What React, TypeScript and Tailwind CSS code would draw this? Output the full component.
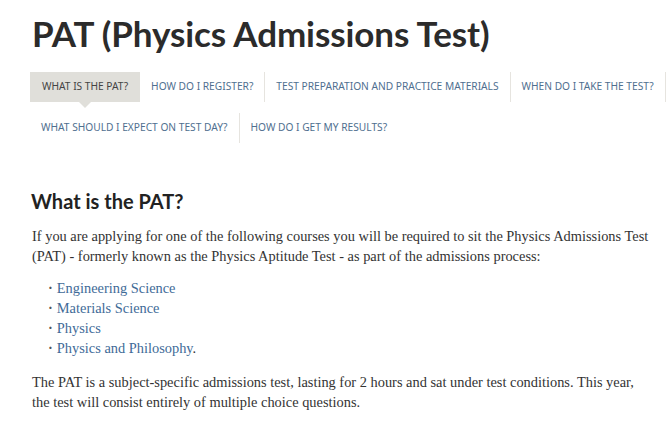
import React from "react";

const rows = [
  [
    { label: "WHAT IS THE PAT?", active: true },
    { label: "HOW DO I REGISTER?" },
    { label: "TEST PREPARATION AND PRACTICE MATERIALS" },
    { label: "WHEN DO I TAKE THE TEST?" },
  ],
  [{ label: "WHAT SHOULD I EXPECT ON TEST DAY?" }, { label: "HOW DO I GET MY RESULTS?", last: true }],
];

const courses = [
  "Engineering Science",
  "Materials Science",
  "Physics",
  "Physics and Philosophy",
];

type Tab = { label: string; active?: boolean; last?: boolean };

function TabItem({ t }: { t: Tab }) {
  if (t.active) {
    return (
      <li className="relative shrink-0 whitespace-nowrap h-[30px] flex items-center px-[12px] bg-[#e0dfda] text-[#444]">
        {t.label}
        <span className="absolute left-1/2 -translate-x-1/2 top-full w-0 h-0 border-l-[6px] border-r-[6px] border-t-[6px] border-l-transparent border-r-transparent border-t-[#e0dfda]" />
      </li>
    );
  }
  return (
    <li
      className={
        t.last
          ? "shrink-0 whitespace-nowrap h-[30px] flex items-center px-[11px] text-[#4f6f8f]"
          : "shrink-0 whitespace-nowrap h-[30px] flex items-center px-[11px] text-[#4f6f8f] border-r border-[#e6e4df]"
      }
    >
      {t.label}
    </li>
  );
}

export default function App() {
  return (
    <div className="w-[667px] h-[428px] overflow-hidden bg-white text-[#333]">
      <div className="pl-[30px] pt-[12px]">
        <h1
          className="text-[35px] leading-[42px] font-bold text-[#2b2b2b] pl-[2px] tracking-[-0.1px]"
          style={{ fontFamily: 'Lato, sans-serif' }}
        >
          PAT (Physics Admissions Test)
        </h1>
        <div
          className="mt-[18px] flex flex-col gap-y-[11px] text-[10.2px]"
          style={{ fontFamily: '"Noto Sans", sans-serif' }}
        >
          {rows.map((r, i) => (
            <ul key={i} className="flex">
              {r.map((t) => (
                <TabItem key={t.label} t={t} />
              ))}
            </ul>
          ))}
        </div>
        <h2
          className="mt-[44px] text-[20px] leading-[28px] font-bold text-[#222] pl-[1px]"
          style={{ fontFamily: 'Lato, sans-serif' }}
        >
          What is the PAT?
        </h2>
        <div
          className="pl-[2px] pr-[16px] text-[14.4px] leading-[20px] text-[#333]"
          style={{ fontFamily: '"Liberation Serif", serif' }}
        >
          <p className="mt-[11px]">
            If you are applying for one of the following courses you will be required to sit the Physics Admissions Test
            (PAT) - formerly known as the Physics Aptitude Test - as part of the admissions process:
          </p>
          <ul className="mt-[12px] pl-[16px]">
            {courses.map((c, i) => (
              <li key={c} className="flex items-baseline gap-[4px]">
                <span className="text-[#555] font-bold">·</span>
                <span>
                  <a className="text-[#3f6b98]">{c}</a>
                  {i === courses.length - 1 ? "." : ""}
                </span>
              </li>
            ))}
          </ul>
          <p className="mt-[14px]">
            The PAT is a subject-specific admissions test, lasting for 2 hours and sat under test conditions. This year,
            the test will consist entirely of multiple choice questions.
          </p>
        </div>
      </div>
    </div>
  );
}
